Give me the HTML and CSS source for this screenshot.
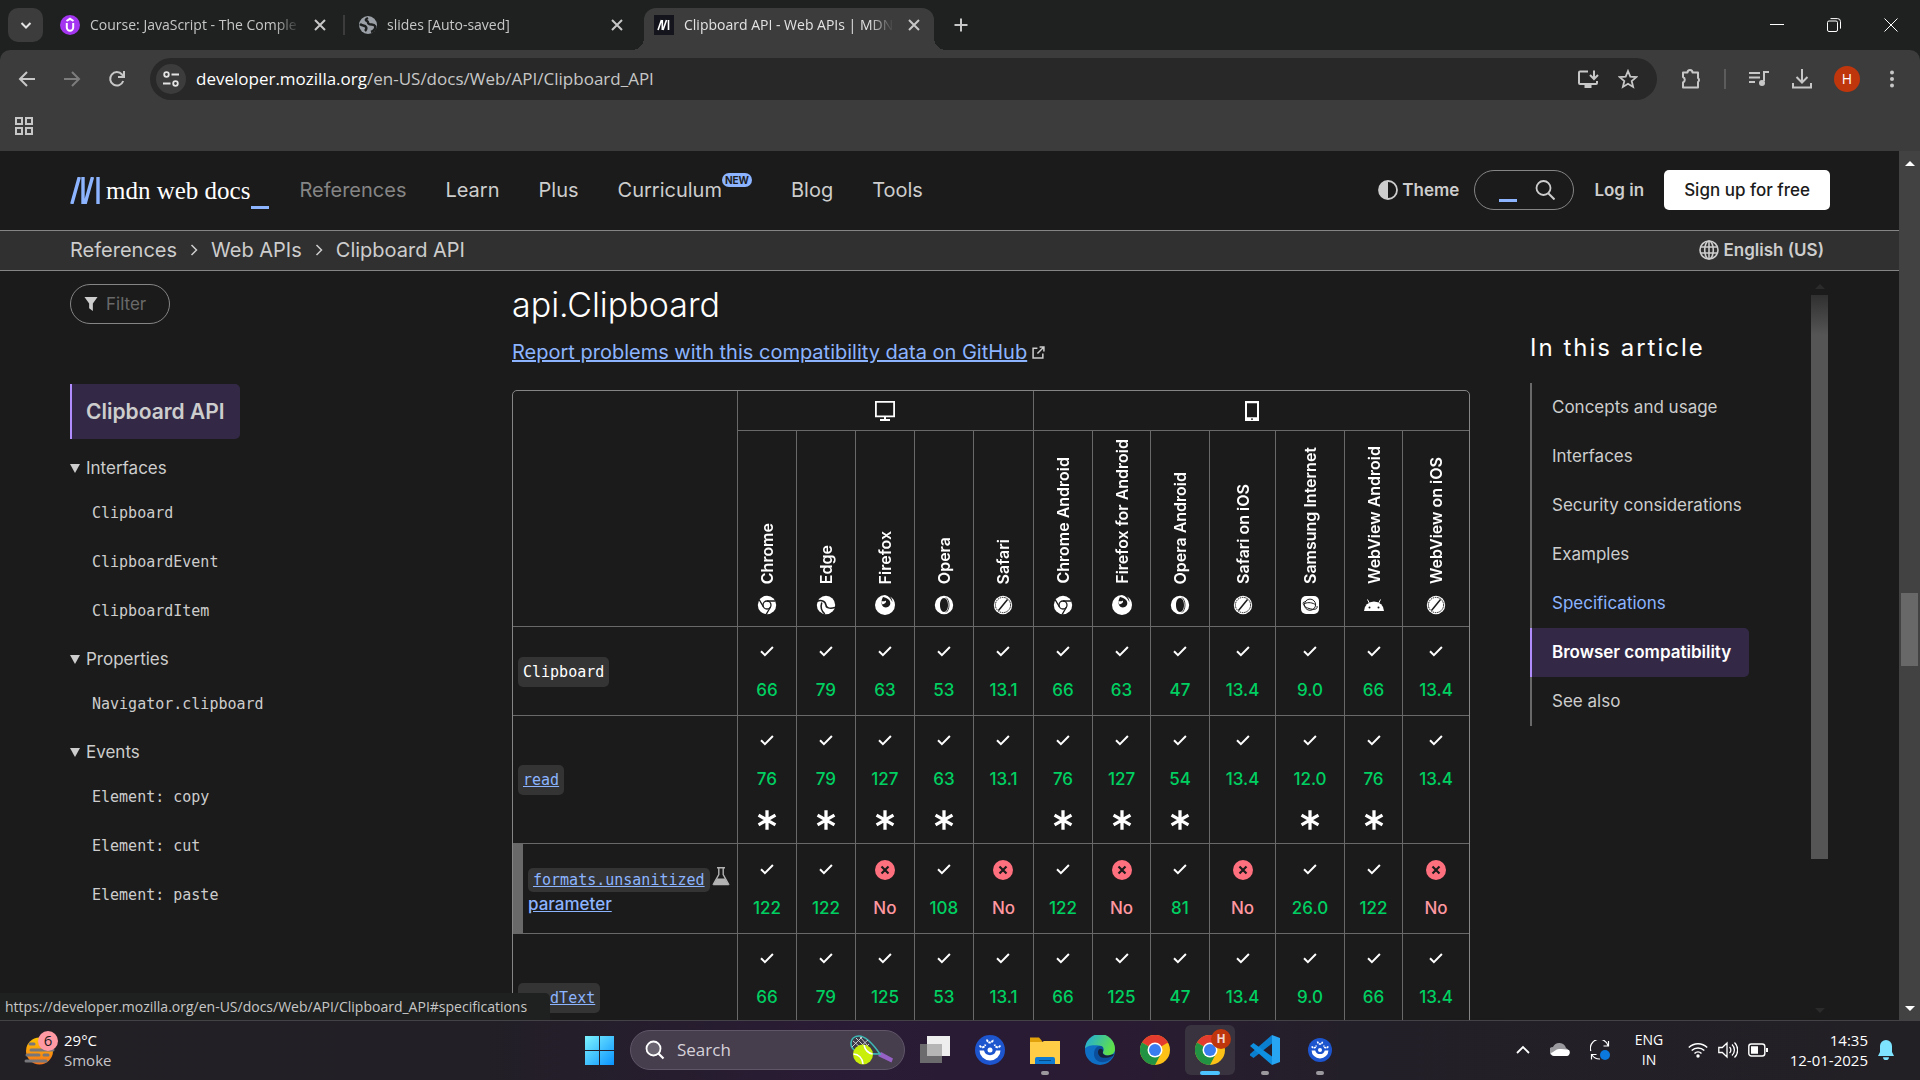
FILE: index.html
```html
<!DOCTYPE html>
<html lang="en">
<head>
<meta charset="utf-8">
<title>Clipboard API - Web APIs | MDN</title>
<link rel="stylesheet" href="styles.css">
</head>
<body>
<svg class="sprite" aria-hidden="true">
  <symbol id="i-close" viewBox="0 0 20 20"><path d="M5 5l10 10M15 5L5 15" fill="none" stroke="currentColor" stroke-width="2"/></symbol>
  <symbol id="i-check" viewBox="0 0 20 20"><path d="M4 9.200l3.900 3.900 8-8.100" fill="none" stroke="currentColor" stroke-width="2"/></symbol>
  <symbol id="i-no" viewBox="0 0 20 20"><circle cx="10" cy="10" r="10" fill="#ff707f"/><path d="M6.500 6.500l7 7M13.500 6.500l-7 7" stroke="#1b1b1b" stroke-width="2.200"/></symbol>
  <symbol id="i-star" viewBox="0 0 24 24"><path d="M12 3v18M4.200 7.500l15.600 9M19.800 7.500l-15.600 9" stroke="currentColor" stroke-width="3"/></symbol>
  <symbol id="b-chrome" viewBox="0 0 20 20"><circle cx="10" cy="10" r="9.200" fill="currentColor"/><circle cx="10" cy="10" r="4" fill="none" stroke="#1b1b1b" stroke-width="1.300"/><path d="M10 6h8.500M6.500 12L2.300 4.800M13.500 12l-4.300 7.300" stroke="#1b1b1b" stroke-width="1.300"/></symbol>
  <symbol id="b-edge" viewBox="0 0 20 20"><circle cx="10" cy="10" r="9.200" fill="currentColor"/><path d="M1 6.500C5 4.500 9.500 6 9.800 10M5.800 7.500c-1.500 4.500.200 9 3 11.500M10 9.500c-.500 3.500 4 4.500 9 3" fill="none" stroke="#1b1b1b" stroke-width="1.500"/></symbol>
  <symbol id="b-firefox" viewBox="0 0 20 20"><path d="M10 0a10 10 0 1 0 10 10C20 6 18 3 15 1.500c2 2 2.500 4 2.300 5.500C16 4 14 1 10 0z" fill="currentColor"/><path d="M8 2C6.500 5 6 7 6.800 9.500c.700 2.500 3.700 3.500 6 2.500 2.700-1.200 3.200-4 1.700-6.500C13 3.500 10.500 2.500 8 2z" fill="#1b1b1b"/><path d="M6 6.500c2-1 4 .500 5-1 .500 2-1 3-3.500 4z" fill="currentColor"/></symbol>
  <symbol id="b-opera" viewBox="0 0 20 20"><path fill-rule="evenodd" fill="currentColor" d="M10 .800a9.200 9.200 0 1 0 0 18.400A9.200 9.200 0 0 0 10 .800zm0 2.200c2.400 0 4 3 4 7s-1.600 7-4 7-4-3-4-7 1.600-7 4-7z"/><path d="M12 2.500c4 3 4 12 0 15" fill="none" stroke="#1b1b1b" stroke-width=".800"/></symbol>
  <symbol id="b-safari" viewBox="0 0 20 20"><circle cx="10" cy="10" r="9.200" fill="currentColor"/><circle cx="10" cy="10" r="7.600" fill="none" stroke="#1b1b1b" stroke-width="1" stroke-dasharray="1.500 .800"/><path d="M5.500 15.500L14.500 4.500" stroke="#1b1b1b" stroke-width="1.500"/></symbol>
  <symbol id="b-samsung" viewBox="0 0 20 20"><rect x="1" y="1" width="18" height="18" rx="5" fill="currentColor"/><circle cx="10" cy="9.700" r="5.600" fill="none" stroke="#1b1b1b"/><path d="M4.500 6.500C1.500 8 4 12 9 13.500s9 1 8-2.500M4.500 8.500c4-1.500 8-1 11.500 1.500" fill="none" stroke="#1b1b1b"/></symbol>
  <symbol id="b-android" viewBox="0 0 20 20"><path d="M0 16a10 9.500 0 0 1 20 0z" fill="currentColor"/><path d="M5.500 8.500L3.500 4.500M14.500 8.500l2-4" stroke="currentColor" stroke-width="1"/><circle cx="5.500" cy="12.500" r="1" fill="#1b1b1b"/><circle cx="14.500" cy="12.500" r="1" fill="#1b1b1b"/></symbol>
  <symbol id="t-chrome" viewBox="0 0 30 30"><circle cx="15" cy="15" r="15" fill="#fbc116"/><path d="M15 15L2 7.500A15 15 0 0 1 28 7.500z" fill="#e33b2e"/><path d="M15 15L2 7.500A15 15 0 0 0 15 30l6.100-11.500z" fill="#229342"/><path d="M15 7.500h13" stroke="#e33b2e" stroke-width="1"/><circle cx="15" cy="15" r="7.500" fill="#fff"/><circle cx="15" cy="15" r="6" fill="#3a7df0"/></symbol>
  <symbol id="t-cat" viewBox="0 0 30 30"><circle cx="15" cy="15" r="15" fill="#1d55cf"/><path d="M4.500 15.500H9a6.200 6.200 0 0 0 12 0h4.500a10.500 10 0 0 1-21 0z" fill="#fff"/><circle cx="15" cy="15" r="2.500" fill="#fff"/><path d="M4.800 10.500a2.800 2.800 0 0 0 5.400-1M12 4.500a3 3 0 0 0 6 0M25.200 10.500a2.800 2.800 0 0 1-5.400-1" fill="none" stroke="#fff" stroke-width="2" stroke-dasharray="2.400 .600"/></symbol>
</svg>

<header class="tabstrip">
  <button class="tab-search" aria-label="Search tabs"><svg viewBox="0 0 20 20" class="ic20"><path d="M5.500 8l4.500 4.500L14.500 8" fill="none" stroke="currentColor" stroke-width="2"/></svg></button>
  <div class="tabs">
    <div class="tab">
      <svg viewBox="0 0 20 20" class="ic20"><circle cx="10" cy="10" r="10" fill="#a435f0"/><path d="M6.800 8v4.500a3.200 3.200 0 0 0 6.400 0V8M6.500 6L10 3.800 13.500 6" fill="none" stroke="#fff" stroke-width="2"/></svg>
      <span class="tab-title">Course: JavaScript - The Comple</span>
      <button class="bare" aria-label="Close tab"><svg class="ic20"><use href="#i-close"/></svg></button>
    </div>
    <div class="tab tab-ruled">
      <svg viewBox="0 0 20 20" class="ic20"><circle cx="11" cy="10" r="9" fill="#9aa0a6"/><path d="M11 3c-2 1-3 2-1 3s0 2 2 3 5 0 6 2-1 5-4 6M3 9c2 2 5 1 6 3s0 3-1 4" fill="none" stroke="#1f2120" stroke-width="2.500"/></svg>
      <span class="tab-title">slides [Auto-saved]</span>
      <button class="bare" aria-label="Close tab"><svg class="ic20"><use href="#i-close"/></svg></button>
    </div>
    <div class="tab tab-active">
      <svg viewBox="0 0 20 20" class="ic20"><path d="M0 0h20v20H0z" fill="#14141c"/><path d="M4 15L7.500 5M8.300 5v10M9 15l3.500-10M14.500 5v10" stroke="#fff" stroke-width="1.600"/></svg>
      <span class="tab-title">Clipboard API - Web APIs | MDN</span>
      <button class="bare" aria-label="Close tab"><svg class="ic20"><use href="#i-close"/></svg></button>
    </div>
  </div>
  <button class="bare new-tab" aria-label="New tab"><svg viewBox="0 0 20 20" class="ic20"><path d="M10 3.500v13M3.500 10h13" stroke="currentColor" stroke-width="2"/></svg></button>
  <div class="window-controls">
    <button class="bare" aria-label="Minimize"><svg viewBox="0 0 14 14" class="ic14"><path d="M0 6.500h14" stroke="currentColor"/></svg></button>
    <button class="bare" aria-label="Restore"><svg viewBox="0 0 14 14" class="ic14"><rect x=".500" y="3" width="10" height="10.500" rx="1.500" fill="none" stroke="currentColor"/><path d="M3.500 .600h7a3 3 0 0 1 3 3v7" fill="none" stroke="currentColor"/></svg></button>
    <button class="bare" aria-label="Close"><svg viewBox="0 0 14 14" class="ic14"><path d="M.500 .500l13 13M13.500 .500l-13 13" stroke="currentColor"/></svg></button>
  </div>
</header>

<div class="toolbar">
  <div class="nav-buttons">
    <button class="bare" aria-label="Back"><svg viewBox="0 0 20 20" class="ic20"><path d="M18 10H3.500M10 3l-7 7 7 7" fill="none" stroke="currentColor" stroke-width="2"/></svg></button>
    <button class="bare dim" aria-label="Forward"><svg viewBox="0 0 20 20" class="ic20"><path d="M2 10h14.500M10 3l7 7-7 7" fill="none" stroke="currentColor" stroke-width="2"/></svg></button>
    <button class="bare" aria-label="Reload"><svg viewBox="0 0 20 20" class="ic20"><path d="M16.200 12A6.700 6.700 0 1 1 15 5.500L16.500 7.500M17 2v6h-6" fill="none" stroke="currentColor" stroke-width="2"/></svg></button>
  </div>
  <div class="omnibox">
    <button class="site-info" aria-label="Site information"><svg viewBox="0 0 20 20" class="ic20"><circle cx="5.500" cy="5.500" r="2.300" fill="none" stroke="currentColor" stroke-width="1.800"/><circle cx="14.500" cy="14.500" r="2.300" fill="none" stroke="currentColor" stroke-width="1.800"/><path d="M10.500 5.500H18M2 14.500h7.500" stroke="currentColor" stroke-width="1.800"/></svg></button>
    <a class="url" href="#"><span class="url-host">developer.mozilla.org</span>/en-US/docs/Web/API/Clipboard_API</a>
    <button class="bare" aria-label="Install page"><svg viewBox="0 0 22 20" class="ic22"><path d="M11 2.500H3a1 1 0 0 0-1 1V14a1 1 0 0 0 1 1h16a1 1 0 0 0 1-1v-2M17 1.500v8M13 6l4 4 4-4" fill="none" stroke="currentColor" stroke-width="2"/><path d="M7.500 15h7v4h-7z" fill="currentColor"/></svg></button>
    <button class="bare" aria-label="Bookmark this page"><svg viewBox="0 0 20 20" class="ic20"><path d="M10 2l2.300 5.600 6 .500-4.600 3.900 1.400 5.900L10 14.800 4.900 17.900 6.300 12 1.700 8.100l6-.500z" fill="none" stroke="currentColor" stroke-width="1.800"/></svg></button>
  </div>
  <div class="actions">
    <button class="bare" aria-label="Extensions"><svg viewBox="0 0 22 22" class="ic22"><path d="M3 4.500h4.500a2.500 2.500 0 0 1 5 0H18V10a2.500 2.500 0 0 1 0 4v5.500H3v-5a3 3 0 0 0 0-5.500z" fill="none" stroke="currentColor" stroke-width="2" stroke-linejoin="round"/></svg></button>
    <span class="rule"></span>
    <button class="bare" aria-label="Media controls"><svg viewBox="0 0 22 22" class="ic22"><path d="M1 5h11M1 9.500h11M1 14h6" stroke="currentColor" stroke-width="2"/><path d="M21 4h-5v9" fill="none" stroke="currentColor" stroke-width="2"/><circle cx="14" cy="15" r="3" fill="currentColor"/></svg></button>
    <button class="bare" aria-label="Downloads"><svg viewBox="0 0 20 20" class="ic20"><path d="M10 0v13M4.500 8l5.500 5.500L15.500 8M1 14v4.500h18V14" fill="none" stroke="currentColor" stroke-width="2"/></svg></button>
    <button class="avatar" aria-label="Profile">H</button>
    <button class="bare" aria-label="Menu"><svg viewBox="0 0 20 20" class="ic20"><circle cx="10" cy="3.500" r="2" fill="currentColor"/><circle cx="10" cy="10" r="2" fill="currentColor"/><circle cx="10" cy="16.500" r="2" fill="currentColor"/></svg></button>
  </div>
</div>
<div class="bookmarks">
  <button class="bare" aria-label="Apps"><svg viewBox="0 0 20 20" class="ic20"><path d="M2 2h6v6H2zM12 2h6v6h-6zM2 12h6v6H2zM12 12h6v6h-6z" fill="none" stroke="currentColor" stroke-width="2"/></svg></button>
</div>

<div class="viewport">
  <div class="page">
    <header class="mdn-header">
      <a class="logo" href="#"><svg viewBox="0 0 30 27" class="logo-mark"><path d="M1.800 27L9.300 0M13 0v27M15 27L22.500 0M28 0v27" stroke="#8cb4ff" stroke-width="3.400"/></svg><span>mdn web docs</span><i class="cursor"></i></a>
      <nav class="mdn-nav">
        <a class="muted" href="#">References</a>
        <a href="#">Learn</a>
        <a href="#">Plus</a>
        <a href="#">Curriculum<sup>NEW</sup></a>
        <a href="#">Blog</a>
        <a href="#">Tools</a>
      </nav>
      <div class="mdn-actions">
        <button class="theme"><svg viewBox="0 0 20 20" class="ic20"><circle cx="10" cy="10" r="9" fill="none" stroke="currentColor" stroke-width="1.800"/><path d="M10 1a9 9 0 0 0 0 18z" fill="currentColor"/></svg>Theme</button>
        <label class="search"><input type="search" aria-label="Search MDN"><i class="cursor"></i><svg viewBox="0 0 20 20" class="ic20"><circle cx="8.500" cy="8" r="7" fill="none" stroke="currentColor" stroke-width="1.800"/><path d="M13 13l6.500 6.500" stroke="currentColor" stroke-width="2"/></svg></label>
        <a class="login" href="#">Log in</a>
        <button class="signup">Sign up for free</button>
      </div>
    </header>
    <div class="crumbs">
      <nav class="crumb-list">
        <a href="#">References</a>
        <svg viewBox="0 0 8 12" class="chev"><path d="M1.500 1l5 5-5 5" fill="none" stroke="currentColor" stroke-width="1.500"/></svg>
        <a href="#">Web APIs</a>
        <svg viewBox="0 0 8 12" class="chev"><path d="M1.500 1l5 5-5 5" fill="none" stroke="currentColor" stroke-width="1.500"/></svg>
        <a href="#">Clipboard API</a>
      </nav>
      <button class="theme language"><svg viewBox="0 0 20 20" class="ic20"><g fill="none" stroke="currentColor" stroke-width="1.600"><circle cx="10" cy="10" r="9"/><ellipse cx="10" cy="10" rx="4.300" ry="9"/><path d="M10 1v18M1.500 7h17M1.500 13h17"/></g></svg>English (US)</button>
    </div>

    <div class="columns">
      <aside class="sidebar">
        <label class="filter"><svg viewBox="0 0 14 15" class="ic14"><path d="M0 0h14L9 7v8l-4-3V7z" fill="currentColor"/></svg><input type="text" placeholder="Filter" aria-label="Filter sidebar"></label>
        <a class="side-current" href="#">Clipboard API</a>
        <details open><summary>Interfaces</summary>
          <ul><li><a href="#">Clipboard</a></li><li><a href="#">ClipboardEvent</a></li><li><a href="#">ClipboardItem</a></li></ul></details>
        <details open><summary>Properties</summary>
          <ul><li><a href="#">Navigator.clipboard</a></li></ul></details>
        <details open><summary>Events</summary>
          <ul><li><a href="#">Element: copy</a></li><li><a href="#">Element: cut</a></li><li><a href="#">Element: paste</a></li></ul></details>
      </aside>

      <main class="content">
        <h3>api.Clipboard</h3>
        <p class="report"><a href="#">Report problems with this compatibility data on GitHub</a><svg viewBox="0 0 12 12" class="ext"><path d="M5 2H1v9h9V7M7 1h4v4M11 1L5 7" fill="none" stroke="currentColor" stroke-width="1.400"/></svg></p>
        <table class="compat">
          <colgroup><col><col class="w59"><col class="w59"><col class="w59"><col class="w59"><col class="w60"><col class="w59"><col class="w58"><col class="w59"><col class="w66"><col class="w69"><col class="w58"><col class="w67"></colgroup>
          <thead>
            <tr class="platforms">
              <td rowspan="2"></td>
              <th colspan="5"><svg viewBox="0 0 20 20" class="ic20" aria-label="desktop"><path d="M.900 .900h18.200v14.500H.900z" fill="none" stroke="currentColor" stroke-width="1.800"/><path d="M5 19h10M10 15v4" stroke="currentColor" stroke-width="2"/></svg></th>
              <th colspan="7"><svg viewBox="0 0 20 20" class="ic20" aria-label="mobile"><path fill-rule="evenodd" d="M3 0h14v20H3zM5 2.200v14h10v-14zM9 17.500v1.200h2v-1.200z" fill="currentColor"/></svg></th>
            </tr>
            <tr class="browsers">
              <th><div><span>Chrome</span><svg class="ic20"><use href="#b-chrome"/></svg></div></th>
              <th><div><span>Edge</span><svg class="ic20"><use href="#b-edge"/></svg></div></th>
              <th><div><span>Firefox</span><svg class="ic20"><use href="#b-firefox"/></svg></div></th>
              <th><div><span>Opera</span><svg class="ic20"><use href="#b-opera"/></svg></div></th>
              <th><div><span>Safari</span><svg class="ic20"><use href="#b-safari"/></svg></div></th>
              <th><div><span>Chrome Android</span><svg class="ic20"><use href="#b-chrome"/></svg></div></th>
              <th><div><span>Firefox for Android</span><svg class="ic20"><use href="#b-firefox"/></svg></div></th>
              <th><div><span>Opera Android</span><svg class="ic20"><use href="#b-opera"/></svg></div></th>
              <th><div><span>Safari on iOS</span><svg class="ic20"><use href="#b-safari"/></svg></div></th>
              <th><div><span>Samsung Internet</span><svg class="ic20"><use href="#b-samsung"/></svg></div></th>
              <th><div><span>WebView Android</span><svg class="ic20"><use href="#b-android"/></svg></div></th>
              <th><div><span>WebView on iOS</span><svg class="ic20"><use href="#b-safari"/></svg></div></th>
            </tr>
          </thead>
          <tbody>
            <tr>
              <th scope="row"><code>Clipboard</code></th>
              <td><svg class="ic20"><use href="#i-check"/></svg>66</td>
              <td><svg class="ic20"><use href="#i-check"/></svg>79</td>
              <td><svg class="ic20"><use href="#i-check"/></svg>63</td>
              <td><svg class="ic20"><use href="#i-check"/></svg>53</td>
              <td><svg class="ic20"><use href="#i-check"/></svg>13.1</td>
              <td><svg class="ic20"><use href="#i-check"/></svg>66</td>
              <td><svg class="ic20"><use href="#i-check"/></svg>63</td>
              <td><svg class="ic20"><use href="#i-check"/></svg>47</td>
              <td><svg class="ic20"><use href="#i-check"/></svg>13.4</td>
              <td><svg class="ic20"><use href="#i-check"/></svg>9.0</td>
              <td><svg class="ic20"><use href="#i-check"/></svg>66</td>
              <td><svg class="ic20"><use href="#i-check"/></svg>13.4</td>
            </tr>
            <tr class="noted">
              <th scope="row"><a href="#"><code>read</code></a></th>
              <td><svg class="ic20"><use href="#i-check"/></svg>76<svg class="note"><use href="#i-star"/></svg></td>
              <td><svg class="ic20"><use href="#i-check"/></svg>79<svg class="note"><use href="#i-star"/></svg></td>
              <td><svg class="ic20"><use href="#i-check"/></svg>127<svg class="note"><use href="#i-star"/></svg></td>
              <td><svg class="ic20"><use href="#i-check"/></svg>63<svg class="note"><use href="#i-star"/></svg></td>
              <td><svg class="ic20"><use href="#i-check"/></svg>13.1</td>
              <td><svg class="ic20"><use href="#i-check"/></svg>76<svg class="note"><use href="#i-star"/></svg></td>
              <td><svg class="ic20"><use href="#i-check"/></svg>127<svg class="note"><use href="#i-star"/></svg></td>
              <td><svg class="ic20"><use href="#i-check"/></svg>54<svg class="note"><use href="#i-star"/></svg></td>
              <td><svg class="ic20"><use href="#i-check"/></svg>13.4</td>
              <td><svg class="ic20"><use href="#i-check"/></svg>12.0<svg class="note"><use href="#i-star"/></svg></td>
              <td><svg class="ic20"><use href="#i-check"/></svg>76<svg class="note"><use href="#i-star"/></svg></td>
              <td><svg class="ic20"><use href="#i-check"/></svg>13.4</td>
            </tr>
            <tr class="nested">
              <th scope="row"><div class="feature"><a href="#"><code>formats.unsanitized</code> parameter</a><svg viewBox="0 0 18 19" class="flask"><path d="M5 .700h8M6.800 1v6.500L1.500 17h15L11.200 7.500V1" fill="none" stroke="currentColor" stroke-width="1.400"/><path d="M5 11.500h8l4 6.800H1z" fill="currentColor"/></svg></div></th>
              <td><svg class="ic20"><use href="#i-check"/></svg>122</td>
              <td><svg class="ic20"><use href="#i-check"/></svg>122</td>
              <td class="no"><svg class="ic20"><use href="#i-no"/></svg>No</td>
              <td><svg class="ic20"><use href="#i-check"/></svg>108</td>
              <td class="no"><svg class="ic20"><use href="#i-no"/></svg>No</td>
              <td><svg class="ic20"><use href="#i-check"/></svg>122</td>
              <td class="no"><svg class="ic20"><use href="#i-no"/></svg>No</td>
              <td><svg class="ic20"><use href="#i-check"/></svg>81</td>
              <td class="no"><svg class="ic20"><use href="#i-no"/></svg>No</td>
              <td><svg class="ic20"><use href="#i-check"/></svg>26.0</td>
              <td><svg class="ic20"><use href="#i-check"/></svg>122</td>
              <td class="no"><svg class="ic20"><use href="#i-no"/></svg>No</td>
            </tr>
            <tr class="tall">
              <th scope="row"><a href="#"><code>readText</code></a></th>
              <td><svg class="ic20"><use href="#i-check"/></svg>66</td>
              <td><svg class="ic20"><use href="#i-check"/></svg>79</td>
              <td><svg class="ic20"><use href="#i-check"/></svg>125</td>
              <td><svg class="ic20"><use href="#i-check"/></svg>53</td>
              <td><svg class="ic20"><use href="#i-check"/></svg>13.1</td>
              <td><svg class="ic20"><use href="#i-check"/></svg>66</td>
              <td><svg class="ic20"><use href="#i-check"/></svg>125</td>
              <td><svg class="ic20"><use href="#i-check"/></svg>47</td>
              <td><svg class="ic20"><use href="#i-check"/></svg>13.4</td>
              <td><svg class="ic20"><use href="#i-check"/></svg>9.0</td>
              <td><svg class="ic20"><use href="#i-check"/></svg>66</td>
              <td><svg class="ic20"><use href="#i-check"/></svg>13.4</td>
            </tr>
          </tbody>
        </table>
      </main>

      <aside class="toc">
        <div class="toc-body">
          <h2>In this article</h2>
          <ul>
            <li><a href="#">Concepts and usage</a></li>
            <li><a href="#">Interfaces</a></li>
            <li><a href="#">Security considerations</a></li>
            <li><a href="#">Examples</a></li>
            <li><a class="hovered" href="#">Specifications</a></li>
            <li><a class="current" href="#">Browser compatibility</a></li>
            <li><a href="#">See also</a></li>
          </ul>
        </div>
        <div class="toc-scroll"><i class="arrow up"></i><i class="toc-thumb"></i><i class="arrow down"></i></div>
      </aside>
    </div>
  </div>
  <div class="scrollbar"><i class="arrow up"></i><i class="thumb"></i><i class="arrow down"></i></div>
  <div class="status">https://developer.mozilla.org/en-US/docs/Web/API/Clipboard_API#specifications</div>
</div>

<footer class="taskbar">
  <button class="weather">
    <svg viewBox="0 0 36 36" class="weather-icon"><defs><linearGradient id="sun" x2="0" y2="1"><stop stop-color="#ffc400"/><stop offset="1" stop-color="#f4701b"/></linearGradient></defs><circle cx="15.500" cy="21" r="13.500" fill="url(#sun)"/><path d="M6 14h4M7 20h22M3 25h12M20 25h4M2 31h20" stroke="#77767a" stroke-width="3" stroke-linecap="round"/><circle cx="24" cy="11" r="10" fill="#ff9aa5"/><text x="24" y="16" text-anchor="middle" class="badge-text">6</text></svg>
    <span class="stack"><span class="bright">29°C</span><span>Smoke</span></span>
  </button>
  <div class="apps">
    <button class="app" aria-label="Start"><svg viewBox="0 0 30 30" class="ic30"><defs><linearGradient id="win" x2="1" y2="1"><stop stop-color="#7df3ff"/><stop offset="1" stop-color="#0a93ff"/></linearGradient></defs><path d="M0 1h14v14H0zM15 1h14v14H15zM0 16h14v14H0zM15 16h14v14H15z" fill="url(#win)"/></svg></button>
    <label class="task-search"><svg viewBox="0 0 20 20" class="ic20"><circle cx="8.500" cy="8.500" r="7" fill="#6a6470" stroke="#fff" stroke-width="1.800"/><path d="M13.500 13.500l5 5" stroke="#fff" stroke-width="2.200"/></svg><input type="text" placeholder="Search" aria-label="Search Windows">
      <svg viewBox="0 0 44 30" class="tennis"><path d="M31 17l12 6.500-1.500 4L28 21z" fill="#9561c4"/><path d="M1 9C1 3 5 1 9 1c7 0 14 8 21 18-9 0-16 0-22-2-5-2-7-4-7-8z" fill="#3d3a48" stroke="#3fb8b4" stroke-width="1.600"/><path d="M3 6l14 12M6 3l14 14M10 2l8 9M2 12L12 2M5 16L18 5M10 18l9-9" stroke="#d8d8dd" stroke-width=".900"/><circle cx="13" cy="19.500" r="10" fill="#c8ee0a"/><path d="M14 10c1 5 4 8 8.500 9M3.500 19c5 0 9 4 9.500 10" fill="none" stroke="#fff" stroke-width="1.500"/></svg></label>
    <button class="app" aria-label="Task view"><svg viewBox="0 0 30 30" class="ic30"><path d="M0 9h22v19H0z" fill="#6b6b6d"/><path d="M7 1h23v20H7z" fill="#eee"/><path d="M7 9h15v12H7z" fill="#b5b5b5"/></svg></button>
    <button class="app" aria-label="Assistant"><svg class="ic30"><use href="#t-cat"/></svg></button>
    <button class="app running" aria-label="File Explorer"><svg viewBox="0 0 30 30" class="ic30"><path d="M0 2.500h9l3 3.500v5H0z" fill="#e0a10a"/><path d="M0 7h12l2-1h16v23H0z" fill="#ffcd46"/><path d="M5 29v-5a2 2 0 0 1 2-2h16a2 2 0 0 1 2 2v5z" fill="#0f7ad1"/><path d="M9 25.500h12" stroke="#064b86"/></svg></button>
    <button class="app" aria-label="Edge"><svg viewBox="0 0 30 30" class="ic30"><defs><linearGradient id="edge" x2="1" y2=".400"><stop stop-color="#1fa7e5"/><stop offset="1" stop-color="#5fe04b"/></linearGradient></defs><circle cx="15" cy="15" r="15" fill="#0f6fc4"/><path d="M0 14A15 15 0 0 1 30 14c0 4-3 6.500-7 6.500-3.500 0-5.500-1.500-5-3.500 1-1.500 1-6-4-6.500C7 9.500 1 11 0 14z" fill="url(#edge)"/><path d="M9 19c0-5 3-8.500 7-8 2.500.500 3 3 2 6-1.500 3 2.500 5 10 4-5 9-19 8-19-2z" fill="#0b4f9c"/><path d="M13 17c0 5 5 8 15 4l1-2-6 1.500c-4 0-6-2-5-4.500 0-3-5-3-5 1z" fill="#17203a"/></svg></button>
    <button class="app" aria-label="Chrome"><svg class="ic30"><use href="#t-chrome"/></svg></button>
    <button class="app app-active" aria-label="Chrome, profile H"><svg class="ic30"><use href="#t-chrome"/></svg><span class="profile-badge">H</span></button>
    <button class="app running" aria-label="Visual Studio Code"><svg viewBox="0 0 30 30" class="ic30"><path d="M22 0l8 3v24l-8 3z" fill="#27a4f2"/><path d="M22 0v8.500L3.500 23 0 20.500 0 19z" fill="#0b7fcf"/><path d="M0 11l3.500-3L22 21.500V30z" fill="#0f8fe0"/></svg></button>
    <button class="app running" aria-label="Assistant window"><svg class="ic24"><use href="#t-cat"/></svg></button>
  </div>
  <div class="tray">
    <button class="bare" aria-label="Hidden icons"><svg viewBox="0 0 14 14" class="ic14"><path d="M1 10l6-6 6 6" fill="none" stroke="currentColor" stroke-width="1.800"/></svg></button>
    <button class="bare" aria-label="OneDrive"><svg viewBox="0 0 20 20" class="ic20"><path d="M3 15a4 4 0 0 1 0-8 7 7 0 0 1 13 1 4 4 0 0 1 1 7z" fill="#9a999d"/><path d="M1 13c3-1 5-4 8-4s7 0 10 1c2 3 0 6-2 6H4c-2 0-3-1-3-3z" fill="#fff"/></svg></button>
    <button class="bare" aria-label="Update"><svg viewBox="0 0 20 20" class="ic20"><path d="M.800 11A8.500 8.500 0 0 1 18 5.500M18.500 1v5h-5M10 19a9 9 0 0 1-8-4M1.500 19.500v-5h5" fill="none" stroke="currentColor" stroke-width="1.200"/><circle cx="15" cy="15" r="5" fill="#0a78dc"/></svg></button>
    <button class="stack lang"><span>ENG</span><span>IN</span></button>
    <button class="bare status-icons" aria-label="Network, volume, battery">
      <svg viewBox="0 0 20 20" class="ic20"><g fill="none" stroke="currentColor" stroke-width="1.500"><path d="M.800 7.500a13 13 0 0 1 18.400 0M3.700 10.500a9 9 0 0 1 12.600 0M6.500 13.500a5 5 0 0 1 7 0"/></g><circle cx="10" cy="16" r="1.700" fill="currentColor"/></svg>
      <svg viewBox="0 0 20 20" class="ic20"><g fill="none" stroke="currentColor" stroke-width="1.300"><path d="M.800 7.500h3.500L9 3v14l-4.700-4.500H.800zM11.500 7a4 4 0 0 1 0 6M14 4.500a7.500 7.500 0 0 1 0 11M16.500 2.500a10.500 10.500 0 0 1 0 15"/></g></svg>
      <svg viewBox="0 0 20 20" class="ic20"><rect x=".800" y="4" width="16" height="12" rx="2.500" fill="none" stroke="currentColor" stroke-width="1.400"/><path d="M3 6.200h7v7.600H3zM18 8h2v4h-2z" fill="currentColor"/></svg>
    </button>
    <button class="stack clock"><span>14:35</span><span>12-01-2025</span></button>
    <button class="bare" aria-label="Notifications"><svg viewBox="0 0 16 20" class="bell"><path d="M8 0a6 6 0 0 1 6 6v6l2 4H0l2-4V6a6 6 0 0 1 6-6zM5 17.200h6A3 3 0 0 1 5 17.200z" fill="#7de3ff"/></svg></button>
  </div>
</footer>
</body>
</html>
```
FILE: styles.css
```css
* { box-sizing: border-box; }
html, body { height: 100%; margin: 0; }
body {
  display: flex;
  flex-direction: column;
  overflow: hidden;
  background: #1f2120;
  color: #e3e3e3;
  font: 14px/20px "Open Sans", "Noto Sans", sans-serif;
}
button, input { font: inherit; color: inherit; background: none; border: 0; padding: 0; margin: 0; outline: 0; }
a { color: inherit; text-decoration: none; }
ul { list-style: none; margin: 0; padding: 0; }
svg { display: block; flex: none; }
i { display: block; }
.sprite { display: none; }
.ic14 { width: 14px; height: 14px; }
.ic20 { width: 20px; height: 20px; }
.ic22 { width: 22px; height: 22px; }
.ic24 { width: 24px; height: 24px; }
.ic30 { width: 30px; height: 30px; }
.bare { display: flex; align-items: center; color: #c7c7c7; }

/* Tab strip */
.tabstrip { display: flex; flex: none; height: 50px; padding-left: 8px; }
.tab-search {
  display: flex; align-items: center; justify-content: center;
  width: 35px; height: 34px; margin: 8px 7px 0 0;
  border-radius: 10px; background: #3c3c3c;
}
.tabs { display: flex; gap: 7px; padding-top: 8px; }
.tab {
  position: relative;
  display: flex; align-items: center; gap: 10px;
  width: 290px; padding: 0 10px 8px;
  color: #c7c7c7;
}
.tab-title {
  flex: 1; min-width: 0; white-space: nowrap;
  -webkit-mask-image: linear-gradient(90deg, #000 88%, transparent);
  mask-image: linear-gradient(90deg, #000 88%, transparent);
}
.tab-ruled::before { content: ""; position: absolute; left: -4px; top: 7px; width: 2px; height: 20px; background: #3c3c3c; }
.tab-active { background: #3c3c3c; border-radius: 12px 12px 0 0; color: #e3e3e3; }
.tab-active::before, .tab-active::after {
  content: ""; position: absolute; bottom: 0; width: 12px; height: 12px;
}
.tab-active::before { left: -12px; background: radial-gradient(circle at 0 0, transparent 12px, #3c3c3c 12px); }
.tab-active::after { right: -12px; background: radial-gradient(circle at 100% 0, transparent 12px, #3c3c3c 12px); }
.new-tab { margin: 0 0 0 17px; }
.window-controls { display: flex; gap: 43px; margin-left: auto; padding-right: 22px; }
.window-controls .bare { color: #fff; }

/* Toolbar */
.toolbar {
  display: flex; align-items: center; flex: none;
  height: 58px; padding: 0 18px 0 17px;
  background: #3c3c3c; border-radius: 10px 10px 0 0;
}
.nav-buttons { display: flex; gap: 25px; margin-right: 23px; }
.dim { color: #7c7c7c; }
.omnibox {
  display: flex; align-items: center; flex: 1; gap: 19px;
  height: 42px; padding: 0 19px 0 6px;
  border-radius: 21px; background: #282828;
}
.site-info { display: flex; align-items: center; justify-content: center; width: 30px; height: 30px; margin-right: -9px; border-radius: 50%; background: #3c3c3c; }
.url { flex: 1; font-size: 17px; color: #c7c7c7; }
.url-host { color: #fff; }
.actions { display: flex; align-items: center; gap: 22px; margin-left: 23px; }
.rule { width: 2px; height: 20px; background: #5c5c5c; }
.avatar { width: 26px; height: 26px; border-radius: 50%; background: #bf360c; color: #fff; }
.bookmarks { display: flex; flex: none; height: 43px; padding: 0 14px 8px; background: #3c3c3c; }

/* Browser viewport */
.viewport { position: relative; display: flex; flex: 1; min-height: 0; background: #1b1b1b; }
.page { flex: 1; min-width: 0; overflow: hidden; color: #cdcdcd; font-family: Inter, sans-serif; font-size: 17px; }
.scrollbar { display: flex; flex-direction: column; align-items: center; width: 21px; padding: 5px 0 9px; background: #424242; }
.thumb { flex: none; width: 17px; height: 73px; margin-top: 427px; background: #686868; }
.arrow { border: 5px solid transparent; color: #fff; }
.up { border-bottom-color: currentColor; border-top-width: 0; margin-top: 5px; }
.down { border-top-color: currentColor; border-bottom-width: 0; margin-top: auto; }
.status {
  position: absolute; left: 0; bottom: 0;
  height: 27px; padding: 4px 23px 0 5px;
  background: #1f2120; border-radius: 0 5px 0 0; color: #c7c7c7;
}

/* MDN header */
.mdn-header { display: flex; align-items: center; height: 80px; padding: 0 69px 2px 70px; border-bottom: 1px solid #858585; }
.logo { display: flex; align-items: center; gap: 6px; padding-top: 2px; color: #fff; font: 25px/30px "Liberation Serif", serif; }
.logo-mark { width: 30px; height: 27px; }
.cursor { width: 18px; height: 3px; background: #8cb4ff; }
.logo .cursor { align-self: flex-end; margin: 0 0 -3px -5px; }
.mdn-nav { display: flex; gap: 39px; margin-left: 30px; font-size: 20px; }
.mdn-nav a { display: flex; }
.muted { color: #858585; }
sup { height: 14px; padding: 1px 3px; margin-top: -7px; border-radius: 7px; background: #8cb4ff; color: #1b1b1b; font-size: 10px; line-height: 12px; font-weight: 700; }
.mdn-actions { display: flex; align-items: center; gap: 15px; margin-left: auto; font-weight: 600; }
.theme { display: flex; align-items: center; gap: 4px; font-weight: 600; }
.search { display: flex; align-items: center; width: 100px; height: 40px; padding: 0 18px 0 20px; border: 1px solid #858585; border-radius: 20px; }
.search input { flex: 1; width: 0; min-width: 0; }
.search .cursor { align-self: flex-end; margin: 0 auto 7px 0; }
.search .ic20 { margin-left: 18px; }
.login { margin: 0 5px; }
.signup { height: 40px; padding: 0 20px; border-radius: 5px; background: #fff; color: #1b1b1b; font-weight: 500; }
.crumbs { display: flex; align-items: center; height: 40px; padding: 0 75px 2px 70px; background: #303030; border-bottom: 1px solid #858585; }
.crumb-list { display: flex; align-items: center; gap: 13px; font-size: 20px; }
.chev { width: 8px; height: 12px; }
.language { margin-left: auto; }

/* Page columns */
.columns { display: grid; grid-template-columns: 382px minmax(0, 1fr) 299px; gap: 60px; padding: 13px 70px 0; }
.sidebar { display: flex; flex-direction: column; align-items: flex-start; }
.filter { display: flex; align-items: center; gap: 8px; width: 100px; height: 40px; padding: 0 13px; border: 1px solid #858585; border-radius: 20px; }
.filter input { width: 50px; }
.filter input::placeholder { color: #696969; opacity: 1; }
.side-current {
  margin: 60px 0 19px; padding: 15px 15px 15px 14px;
  border-left: 2px solid #b18cff; border-radius: 0 5px 5px 0;
  background: #332947; font-size: 21px; line-height: 25px; font-weight: 600;
}
summary { height: 20px; list-style: none; display: flex; align-items: center; gap: 6px; }
summary::before { content: ""; border: 5px solid transparent; border-top: 9px solid; border-bottom: 0; }
details ul { padding: 11px 0 13px 22px; }
details li { padding: 14px 0 15px; font: 15px/20px "DejaVu Sans Mono", monospace; }

/* Content */
h3 { margin: 0; color: #fff; font-size: 34px; line-height: 42px; font-weight: 300; }
.report { display: flex; align-items: center; gap: 5px; margin: 14px 0 25px; font-size: 20px; line-height: 25px; }
.report a, .compat a { color: #8cb4ff; text-decoration: underline; }
.ext { width: 13px; height: 13px; }
.compat { width: 100%; table-layout: fixed; border-collapse: separate; border-spacing: 0; border: 1px solid #858585; border-radius: 5px; color: #fff; }
.w58 { width: 58px; } .w59 { width: 59px; } .w60 { width: 60px; } .w66 { width: 66px; } .w67 { width: 67px; } .w69 { width: 69px; }
.compat th, .compat td { padding: 0; border: 0 solid #696969; border-left-width: 1px; }
.compat tr > :first-child { border-left-width: 0; }
.platforms th { height: 39px; border-color: #696969; }
.platforms .ic20 { margin: 0 auto; }
.compat .browsers th { height: 196px; padding-bottom: 11px; border-top-width: 1px; border-left-width: 1px; vertical-align: bottom; }
.browsers div { display: flex; flex-direction: column; align-items: center; gap: 11px; }
.browsers span { writing-mode: vertical-rl; transform: rotate(180deg); white-space: nowrap; font-size: 16px; font-weight: 600; line-height: 20px; }
.compat tbody th { border-top-width: 1px; padding-left: 5px; text-align: left; font-weight: 500; line-height: 25px; }
.compat tbody td { border-top-width: 1px; padding: 15px 0; vertical-align: top; text-align: center; color: #00d061; font-weight: 500; }
.compat tbody td svg { margin: 0 auto 18px; color: #fff; }
.compat tbody td .note { width: 26px; height: 26px; margin: 18px auto 0; }
.compat .noted td { padding-bottom: 10px; }
.compat .nested td { padding-top: 16px; }
.compat .tall th { height: 128px; }
.compat td.no { color: #ff97a0; }
code { padding: 6px 5px; border-radius: 5px; background: #343434; font: 15px "DejaVu Sans Mono", monospace; }
.nested code { padding: 3px 5px; }
.compat .nested th { border-left: 10px solid #696969; }
.feature { display: flex; align-items: flex-start; gap: 2px; padding-top: 7px; }
.feature a { width: min-content; }
.flask { width: 18px; height: 19px; color: #b3b3b3; }

/* Table of contents */
.toc { display: flex; }
.toc-body { flex: 1; padding-top: 49px; }
.toc h2 { margin: 0 0 20px; color: #fff; font-size: 24px; line-height: 30px; font-weight: 400; letter-spacing: 2px; }
.toc ul { border-left: 2px solid #696969; }
.toc li { display: flex; height: 49px; }
.toc li a { display: flex; align-items: center; padding: 0 18px 2px 20px; margin-left: -2px; border-left: 2px solid transparent; }
.toc .hovered { color: #8cb4ff; }
.toc .current { border-left-color: #b18cff; border-radius: 0 5px 5px 0; background: #332947; color: #fff; font-weight: 600; }
.toc-scroll { display: flex; flex-direction: column; align-items: center; width: 17px; height: 729px; margin-right: 1px; }
.toc-scroll .arrow { color: #2b2b2b; }
.toc-scroll .up { margin-top: 0; }
.toc-thumb { width: 17px; height: 564px; margin-top: 6px; background: linear-gradient(#303030, #555 40px); }

/* Taskbar */
.taskbar {
  display: grid; grid-template-columns: 1fr auto 1fr; align-items: center; flex: none;
  height: 60px; padding-bottom: 2px; border-top: 1px solid #444247;
  background: linear-gradient(90deg, #222025 0, #221f26 25%, #2a1b36 45%, #2a1b33 58%, #231f28 70%, #222025 100%);
}
.weather { display: flex; align-items: center; gap: 4px; padding-left: 24px; justify-self: start; color: #c7c5ca; text-align: left; font-size: 15px; }
.weather-icon { width: 36px; height: 36px; margin-top: -4px; }
.badge-text { font: 15px "Open Sans", sans-serif; fill: #1b1b1b; }
.stack { display: flex; flex-direction: column; white-space: nowrap; }
.bright { color: #fff; }
.apps { display: flex; align-items: center; gap: 5px; }
.app { position: relative; display: flex; align-items: center; justify-content: center; width: 50px; height: 50px; border-radius: 6px; }
.app-active { background: #38333f; }
.running::after, .app-active::after { content: ""; position: absolute; bottom: 0; left: 21px; width: 8px; height: 4px; border-radius: 2px; background: #9b999e; }
.app-active::after { left: 15px; width: 20px; background: #4cc2ff; }
.profile-badge { position: absolute; right: 4px; top: 4px; width: 20px; height: 20px; border-radius: 50%; background: #bf360c; color: #f3d6cc; font-size: 12px; font-weight: 700; }
.task-search { display: flex; align-items: center; gap: 12px; width: 275px; height: 40px; padding: 0 10px 0 14px; border: 1px solid #5f5668; border-radius: 20px; background: #463d4d; }
.task-search input { flex: 1; min-width: 0; font-size: 17px; }
.task-search input::placeholder { color: #d6d2da; opacity: 1; }
.tennis { width: 44px; height: 30px; }
.tray { display: flex; align-items: center; justify-self: end; gap: 20px; padding-right: 26px; color: #fff; }
.tray .bare { color: #fff; }
.lang { align-items: center; width: 34px; margin: 0 2px; }
.status-icons { gap: 10px; }
.clock { align-items: flex-end; width: 80px; font-size: 15px; }
.clock + .bare { margin-left: -10px; }
.bell { width: 16px; height: 20px; }
```
